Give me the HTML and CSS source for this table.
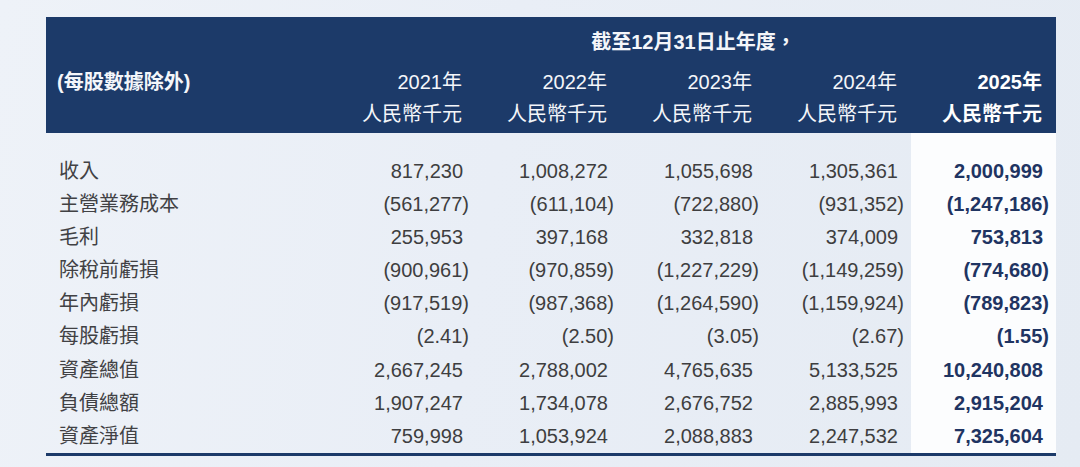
FILE: index.html
```html
<!DOCTYPE html>
<html lang="zh-Hant">
<head>
<meta charset="utf-8">
<title>財務摘要</title>
<link rel="stylesheet" href="styles.css">
</head>
<body>
<div class="page">
  <div class="fin">
    <div class="head">
      <div class="title">截至12月31日止年度，</div>
      <div class="lbl">(每股數據除外)</div>
      <div class="yr">2021年</div>
      <div class="yr">2022年</div>
      <div class="yr">2023年</div>
      <div class="yr">2024年</div>
      <div class="yr cur">2025年</div>
      <div></div>
      <div class="unit">人民幣千元</div>
      <div class="unit">人民幣千元</div>
      <div class="unit">人民幣千元</div>
      <div class="unit">人民幣千元</div>
      <div class="unit cur">人民幣千元</div>
    </div>
    <div class="body">
      <div class="name">收入</div>
      <div class="c">817,230</div><div class="c">1,008,272</div><div class="c">1,055,698</div><div class="c">1,305,361</div><div class="c cur">2,000,999</div>

      <div class="name">主營業務成本</div>
      <div class="c n">(561,277)</div><div class="c n">(611,104)</div><div class="c n">(722,880)</div><div class="c n">(931,352)</div><div class="c n cur">(1,247,186)</div>

      <div class="name">毛利</div>
      <div class="c">255,953</div><div class="c">397,168</div><div class="c">332,818</div><div class="c">374,009</div><div class="c cur">753,813</div>

      <div class="name">除稅前虧損</div>
      <div class="c n">(900,961)</div><div class="c n">(970,859)</div><div class="c n">(1,227,229)</div><div class="c n">(1,149,259)</div><div class="c n cur">(774,680)</div>

      <div class="name">年內虧損</div>
      <div class="c n">(917,519)</div><div class="c n">(987,368)</div><div class="c n">(1,264,590)</div><div class="c n">(1,159,924)</div><div class="c n cur">(789,823)</div>

      <div class="name">每股虧損</div>
      <div class="c n">(2.41)</div><div class="c n">(2.50)</div><div class="c n">(3.05)</div><div class="c n">(2.67)</div><div class="c n cur">(1.55)</div>

      <div class="name">資產總值</div>
      <div class="c">2,667,245</div><div class="c">2,788,002</div><div class="c">4,765,635</div><div class="c">5,133,525</div><div class="c cur">10,240,808</div>

      <div class="name">負債總額</div>
      <div class="c">1,907,247</div><div class="c">1,734,078</div><div class="c">2,676,752</div><div class="c">2,885,993</div><div class="c cur">2,915,204</div>

      <div class="name">資產淨值</div>
      <div class="c">759,998</div><div class="c">1,053,924</div><div class="c">2,088,883</div><div class="c">2,247,532</div><div class="c cur">7,325,604</div>
    </div>
  </div>
</div>
</body>
</html>
```
FILE: styles.css
```css
html, body {
  margin: 0;
  padding: 0;
}

body {
  width: 1080px;
  height: 467px;
  overflow: hidden;
  background: linear-gradient(100deg, #eef2f8 0%, #e9eef6 45%, #e5ebf3 100%);
  font-family: "Liberation Sans", "Noto Sans CJK TC", sans-serif;
  font-size: 20px;
  color: #3e3e40;
}

.page {
  padding: 17px 0 0 46px;
}

.fin {
  width: 1010px;
}

.head {
  display: grid;
  grid-template-columns: 285px repeat(5, 145px);
  grid-template-rows: 38px 30px 34px;
  padding: 12px 0 2px;
  background: #1c3a69;
  color: #f4f6fa;
  box-sizing: border-box;
  height: 116px;
}

.title {
  grid-column: 2 / span 5;
  align-self: start;
  text-align: center;
  font-weight: bold;
  line-height: 26px;
}

.head .lbl {
  grid-column: 1;
  padding-left: 11px;
  font-weight: bold;
  line-height: 30px;
}

.yr {
  text-align: right;
  padding-right: 14px;
  line-height: 30px;
}

.unit {
  text-align: right;
  padding-right: 14px;
  line-height: 34px;
}

.head .cur {
  font-weight: bold;
  color: #ffffff;
}

.body {
  display: grid;
  grid-template-columns: 285px repeat(5, 145px);
  grid-auto-rows: 33.1px;
  padding-top: 22px;
  border-bottom: 3px solid #1c3a69;
  background: linear-gradient(to right, transparent 865px, #fcfdfe 865px);
}

.name {
  padding-left: 13px;
  line-height: 33px;
  color: #414144;
}

.c {
  text-align: right;
  padding-right: 13px;
  line-height: 33px;
}

.c.n {
  padding-right: 7px;
}

.body .cur {
  font-weight: bold;
  color: #1f3462;
}
```
